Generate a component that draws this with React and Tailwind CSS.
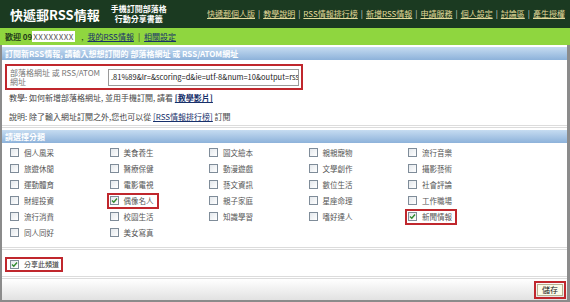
import React from 'react';

// Feed subscription form of the mobile RSS service
const navLinks = ['快遞郵個人版', '教學說明', 'RSS情報排行榜', '新增RSS情報', '申請服務', '個人設定', '討論區', '產生授權'];

const categories = [
  ['個人風采', '美食養生', '圖文繪本', '親親寵物', '流行音樂'],
  ['旅遊休閒', '醫療保健', '動漫遊戲', '文學創作', '攝影藝術'],
  ['運動體育', '電影電視', '藝文資訊', '數位生活', '社會評論'],
  ['財經投資', '偶像名人', '親子家庭', '星座命理', '工作職場'],
  ['流行消費', '校園生活', '知識學習', '嗜好達人', '新聞情報'],
  ['同人同好', '美女寫真'],
];

const checkedItems = ['偶像名人', '新聞情報'];

const Box = ({ checked }) => (
  <span className="w-[9px] h-[9px] border border-[#7f8c99] bg-gradient-to-br from-[#e4e8ec] to-white flex items-center justify-center shrink-0">
    {checked && (
      <svg width="7" height="7" viewBox="0 0 7 7">
        <path d="M1 3.5 L2.8 5.3 L6 1.5" fill="none" stroke="#2f8a2f" strokeWidth="1.4" />
      </svg>
    )}
  </span>
);

const BlueBar = ({ children, className = '' }) => (
  <div className={`h-[13px] shrink-0 overflow-hidden bg-gradient-to-b from-[#c6dcf1] to-[#8db2da] text-white font-bold text-[8px] leading-[13px] px-[3px] whitespace-nowrap ${className}`}>
    {children}
  </div>
);

const Separator = ({ className = '' }) => (
  <div className={`h-[3px] border-t border-b border-[#dcdcdc] shrink-0 ${className}`} />
);

export default function App() {
  return (
    <div className="w-[570px] h-[302px] bg-white overflow-hidden flex flex-col font-['Noto_Sans_CJK_TC',sans-serif] text-[#333]">
      {/* top header */}
      <div className="h-[28px] bg-[#1b3a21] flex items-center pl-[10px] pr-[5px] shrink-0 overflow-hidden">
        <span className="text-white font-bold text-[13px] leading-none">快遞郵RSS情報</span>
        <div className="ml-[11px] flex flex-col items-center text-white font-bold text-[8px] leading-[10px]">
          <span>手機訂閱部落格</span>
          <span>行動分享書籤</span>
        </div>
        <div className="ml-auto flex items-center text-[8px] leading-none text-[#e3d99a]">
          {navLinks.map((l, i) => (
            <React.Fragment key={l}>
              {i > 0 && <span className="mx-[3px] text-[#d8d8d8]">|</span>}
              <a href="#" className="underline">{l}</a>
            </React.Fragment>
          ))}
        </div>
      </div>

      {/* welcome bar */}
      <div className="h-[17px] bg-[#8fd63f] flex items-center pl-[5px] text-[8px] leading-none shrink-0 overflow-hidden">
        <span className="font-bold text-[#1f3b1a]">歡迎 09</span>
        <span className="bg-white px-[1px] h-[11px] flex items-center text-[#555] tracking-[0.5px] w-[43px]">XXXXXXXX</span>
        <span className="ml-[6px] text-[#1f3b1a]">,</span>
        <a href="#" className="ml-[4px] underline text-[#17306b]">我的RSS情報</a>
        <span className="mx-[4px] text-[#333]">|</span>
        <a href="#" className="underline text-[#17306b]">相關設定</a>
      </div>

      {/* main panel */}
      <div className="h-[257px] shrink-0 flex flex-col border-l-2 border-r-[3px] border-b-2 border-[#8b8b8b]">
        <BlueBar className="mt-[2px]">訂閱新RSS情報, 請輸入想想訂閱的 部落格網址 或 RSS/ATOM網址</BlueBar>

        <div className="pl-[3px] mt-[4px] h-[26px] shrink-0">
          <div className="w-[298px] h-[26px] border-2 border-[#c0272d] flex items-center pl-[3px] pr-[2px]">
            <span className="w-[98px] text-[8px] leading-[9px] text-[#777]">部落格網址 或 RSS/ATOM 網址</span>
            <div className="flex-1 h-[17px] border border-[#9a9a9a] flex items-center overflow-hidden px-[2px] text-[7.5px] text-[#222] whitespace-nowrap">
              .81%89&amp;lr=&amp;scoring=d&amp;ie=utf-8&amp;num=10&amp;output=rss
            </div>
          </div>
        </div>

        <div className="mt-[2px] h-[12px] shrink-0 pl-[7px] text-[8px] leading-[12px] text-[#444] whitespace-nowrap">
          教學: 如何新增部落格網址, 並用手機訂閱, 請看 <a href="#" className="font-bold underline text-[#17306b]">[教學影片]</a>
        </div>
        <div className="mt-[7px] h-[12px] shrink-0 pl-[7px] text-[8px] leading-[12px] text-[#444] whitespace-nowrap">
          說明: 除了輸入網址訂閱之外,您也可以從 <a href="#" className="underline text-[#17306b]">[RSS情報排行榜]</a> 訂閱
        </div>

        <Separator className="mt-[2px]" />
        <BlueBar className="mt-[2px]">請選擇分類</BlueBar>

        {/* category grid */}
        <div className="mt-[3px] h-[93px] shrink-0 grid grid-cols-[repeat(5,99.5px)] auto-rows-[13px] gap-y-[3px] pl-[8px]">
          {categories.flat().map((c) => {
            const checked = checkedItems.includes(c);
            return (
              <div key={c} className="h-[13px] flex items-center">
                <div className={`flex items-center gap-[5px] h-[16px] ${checked ? 'border-2 border-[#c0272d] -ml-[3px] pl-[1px] pr-[3px]' : ''}`}>
                  <Box checked={checked} />
                  <span className="text-[7.5px] leading-none text-[#555] whitespace-nowrap">{c}</span>
                </div>
              </div>
            );
          })}
        </div>

        <Separator className="mt-[8px]" />
        <div className="mt-[7px] h-[15px] shrink-0 pl-[3px]">
          <div className="w-[58px] h-[15px] border-2 border-[#c0272d] flex items-center gap-[5px] pl-[3px] whitespace-nowrap">
            <Box checked />
            <span className="text-[7px] leading-none text-[#333]">分享此頻道</span>
          </div>
        </div>
        <Separator className="mt-[4px]" />

        {/* bottom bar */}
        <div className="flex-1 min-h-0 bg-gradient-to-b from-white to-[#e2e2e2] flex items-center justify-end pr-[1px]">
          <div className="h-[18px] border-2 border-[#c0272d] p-[1px] flex">
            <button className="h-[12px] px-[4px] border border-[#b8b090] bg-[#fbfbe8] text-[8px] leading-none text-[#222]">儲存</button>
          </div>
        </div>
      </div>
    </div>
  );
}
